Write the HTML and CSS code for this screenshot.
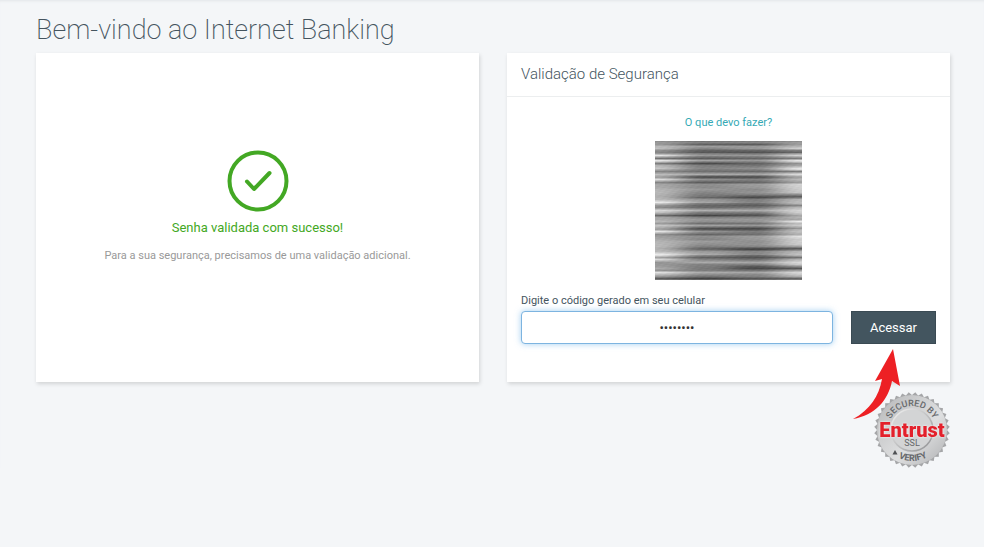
FILE: index.html
```html
<!DOCTYPE html>
<html lang="pt-BR">
<head>
    <meta charset="UTF-8">
    <meta name="viewport" content="width=device-width, initial-scale=1.0">
    <title>Internet Banking</title>
    <link rel="stylesheet" href="styles.css">
</head>
<body>
    <main class="page">
        <h1 class="page-title">Bem-vindo ao Internet Banking</h1>

        <div class="cards">
            <section class="card status">
                <svg class="status-icon" viewBox="0 0 62 62" aria-hidden="true">
                    <circle cx="31" cy="31" r="28.5"/>
                    <path d="M20 31.500l7 7.500 15.500-16"/>
                </svg>
                <p class="status-title">Senha validada com sucesso!</p>
                <p class="status-text">Para a sua segurança, precisamos de uma validação adicional.</p>
            </section>

            <section class="card">
                <h2 class="card-title">Validação de Segurança</h2>
                <form class="card-body" id="tokenForm">
                    <a class="help-link" href="#">O que devo fazer?</a>
                    <canvas class="code-image" id="codeImage" width="147" height="139"></canvas>
                    <label class="token-label" for="token">Digite o código gerado em seu celular</label>
                    <div class="token-row">
                        <input class="token-input" type="password" id="token" value="12345678">
                        <button class="token-button" type="submit">Acessar</button>
                    </div>
                </form>
            </section>
        </div>

        <footer class="footer">
            <a class="seal" href="#" aria-label="Entrust SSL">
                <svg class="seal-image" viewBox="-38 -38 76 76">
                    <defs>
                        <linearGradient id="metal" x1="0" y1="0" x2="1" y2="1">
                            <stop offset="0" stop-color="#b4b5b7"/>
                            <stop offset="0.35" stop-color="#cfd0d1"/>
                            <stop offset="0.6" stop-color="#dedfe0"/>
                            <stop offset="1" stop-color="#aeafb1"/>
                        </linearGradient>
                        <linearGradient id="ring" x1="0" y1="0" x2="1" y2="1">
                            <stop offset="0" stop-color="#f4f4f4"/>
                            <stop offset="1" stop-color="#8f9092"/>
                        </linearGradient>
                        <rect id="tooth" x="-26.800" y="-26.800" width="53.600" height="53.600"/>
                        <path id="arcTop" d="M-24 0A24 24 0 0 1 24 0"/>
                        <path id="arcBottom" d="M-31 0A31 31 0 0 0 31 0"/>
                    </defs>
                    <!-- nine turned squares make the 36 teeth -->
                    <g fill="#a5a6a8">
                        <use href="#tooth"/>
                        <use href="#tooth" transform="rotate(10)"/>
                        <use href="#tooth" transform="rotate(20)"/>
                        <use href="#tooth" transform="rotate(30)"/>
                        <use href="#tooth" transform="rotate(40)"/>
                        <use href="#tooth" transform="rotate(50)"/>
                        <use href="#tooth" transform="rotate(60)"/>
                        <use href="#tooth" transform="rotate(70)"/>
                        <use href="#tooth" transform="rotate(80)"/>
                    </g>
                    <circle r="35" fill="url(#metal)"/>
                    <circle r="21" fill="#d3d4d5" stroke="url(#ring)" stroke-width="1.500"/>
                    <text class="seal-arc"><textPath href="#arcTop" startOffset="50%">SECURED BY</textPath></text>
                    <path d="M-17 20l2.500 4.500h-5z" fill="#4f5154"/>
                    <text class="seal-arc seal-verify"><textPath href="#arcBottom" startOffset="51%">VERIFY</textPath></text>
                    <text class="seal-brand" x="0" y="7">Entrust</text>
                    <text class="seal-ssl" x="0" y="16">SSL</text>
                </svg>
                <svg class="pointer" viewBox="0 0 50 72" aria-hidden="true">
                    <path d="M40 0L22 32L29 30C26 47 17 61 0 70C22 66 35 52 39 32L47 37Z"/>
                </svg>
            </a>
        </footer>
    </main>

    <script src="script.js"></script>
</body>
</html>
```

FILE: styles.css
```css
body {
    margin: 0;
    background-color: #f4f6f8;
    box-shadow: inset 0 3px 3px -2px #e2e5e8;
    color: #44545e;
    font-family: Roboto, "Liberation Sans", sans-serif;
    font-size: 11px;
    line-height: 18px;
}
.page {
    padding: 12px 34px 0 36px;
}
.page-title {
    margin: 0 0 5px;
    font-size: 27px;
    font-weight: 200;
    line-height: 36px;
}
.cards {
    display: grid;
    grid-template-columns: 1fr 1fr;
    gap: 28px;
}
.card {
    background-color: #fff;
    box-shadow: 1px 2px 4px rgba(0, 0, 0, 0.14);
}
.status {
    display: flex;
    flex-direction: column;
    align-items: center;
    justify-content: center;
    padding-bottom: 20px;
    text-align: center;
}
.status-icon {
    width: 62px;
    height: 62px;
    fill: none;
    stroke: #43a824;
    stroke-width: 4;
    stroke-linecap: round;
    stroke-linejoin: round;
}
.status-title {
    margin: 6px 0 9px;
    color: #43a824;
    font-size: 13px;
    line-height: 20px;
}
.status-text {
    margin: 0;
    color: #999;
}
.card-title {
    margin: 0;
    padding: 11px 14px;
    border-bottom: 1px solid #eceeef;
    font-size: 15px;
    font-weight: 300;
    line-height: 21px;
}
.card-body {
    display: flex;
    flex-direction: column;
    padding: 17px 14px 38px;
}
.help-link {
    align-self: center;
    color: #35a9b5;
    text-decoration: none;
}
.code-image {
    align-self: center;
    margin: 9px 0 12px;
}
.token-label {
    margin-bottom: 1px;
}
.token-row {
    display: flex;
    gap: 18px;
}
.token-input {
    flex: 1;
    min-width: 0;
    box-sizing: border-box;
    height: 33px;
    border: 1px solid #7db4e0;
    border-radius: 4px;
    box-shadow: 0 0 6px rgba(102, 175, 233, 0.6);
    background-color: #fff;
    color: #333;
    font-family: Roboto, sans-serif;
    font-size: 13px;
    text-align: center;
    outline: none;
}
.token-button {
    height: 33px;
    padding: 0 18px;
    border: 1px solid #3a4a53;
    background-color: #43555f;
    color: #fff;
    font-family: Roboto, sans-serif;
    font-size: 13px;
    cursor: pointer;
}
.footer {
    display: flex;
    justify-content: flex-end;
    padding-top: 10px;
}
.seal {
    position: relative;
    display: block;
}
.seal-image {
    display: block;
    width: 76px;
    height: 76px;
}
.seal-arc {
    fill: #66686b;
    font-size: 9px;
    font-weight: 500;
    text-anchor: middle;
}
.seal-verify {
    font-weight: 700;
}
.seal-brand {
    fill: #e3202b;
    filter: drop-shadow(0 0 1px #fff);
    font-size: 20px;
    font-weight: 900;
    text-anchor: middle;
}
.seal-ssl {
    fill: #66686b;
    font-size: 9px;
    text-anchor: middle;
}
/* red arrow that points at the button */
.pointer {
    position: absolute;
    top: -43px;
    left: -21px;
    width: 50px;
    height: 72px;
    fill: #ed2024;
}
```

FILE: script.js
```js
// Grey levels of the code image: y, then left, centre left, centre right, right
const lines = [
    [0, 140, 110, 120, 140], [1, 150, 125, 130, 155], [3, 150, 90, 85, 155],
    [5, 185, 155, 150, 180], [7, 190, 130, 150, 210], [9, 140, 90, 95, 120],
    [11, 130, 80, 75, 95], [12, 150, 120, 110, 150], [14, 235, 150, 150, 215],
    [15, 190, 120, 125, 180], [17, 110, 85, 95, 120], [19, 235, 160, 150, 235],
    [20, 210, 130, 130, 220], [22, 120, 65, 90, 145], [24, 180, 120, 110, 165],
    [27, 200, 130, 140, 235], [28, 175, 120, 125, 225], [30, 130, 105, 100, 120],
    [32, 170, 150, 150, 200], [33, 190, 170, 165, 225], [35, 165, 80, 80, 170],
    [36, 160, 75, 75, 160], [38, 225, 140, 125, 185], [41, 130, 85, 95, 155],
    [43, 165, 140, 155, 215], [46, 170, 135, 150, 210], [48, 180, 150, 135, 205],
    [51, 185, 130, 145, 200], [53, 180, 120, 125, 140], [55, 175, 110, 80, 90],
    [56, 180, 95, 65, 110], [58, 185, 145, 120, 180], [61, 240, 165, 130, 190],
    [62, 205, 120, 105, 185], [64, 150, 95, 85, 130], [66, 135, 100, 110, 185],
    [69, 220, 175, 170, 215], [71, 195, 120, 125, 210], [73, 140, 90, 85, 185],
    [74, 100, 60, 75, 165], [76, 165, 125, 130, 180], [78, 170, 150, 150, 165],
    [80, 185, 140, 145, 240], [82, 155, 105, 110, 190], [84, 200, 160, 150, 205],
    [87, 165, 70, 65, 150], [88, 160, 80, 75, 180], [90, 235, 145, 120, 195],
    [93, 140, 95, 105, 175], [95, 155, 140, 155, 230], [98, 170, 130, 150, 205],
    [100, 180, 155, 140, 210], [103, 185, 140, 145, 205], [105, 185, 125, 130, 160],
    [107, 175, 95, 70, 85], [108, 180, 100, 60, 110], [110, 185, 150, 130, 180],
    [113, 240, 170, 135, 195], [114, 225, 130, 100, 180], [116, 160, 90, 75, 110],
    [118, 220, 125, 105, 180], [121, 145, 170, 165, 220], [123, 150, 125, 125, 205],
    [125, 155, 120, 80, 140], [127, 170, 115, 65, 80], [129, 145, 120, 110, 160],
    [131, 230, 170, 165, 220], [133, 190, 140, 135, 205], [135, 150, 110, 125, 175],
    [137, 85, 60, 80, 95], [139, 140, 120, 120, 140]
];

const canvas = document.getElementById('codeImage');
const ctx = canvas.getContext('2d');
const stops = [0, 0.34, 0.68, 1];

// eased, so that no vertical edge shows at the stops
function greyAt(levels, x) {
    const n = x < stops[1] ? 0 : x < stops[2] ? 1 : 2;
    const t = (x - stops[n]) / (stops[n + 1] - stops[n]);
    return levels[n] + (levels[n + 1] - levels[n]) * t * t * (3 - 2 * t);
}

for (let y = 0; y < canvas.height; y++) {
    const i = lines.findIndex(line => line[0] > y);
    const above = lines[i - 1];
    const below = lines[i];
    const t = (y - above[0]) / (below[0] - above[0]);
    const levels = [1, 2, 3, 4].map(n => above[n] + (below[n] - above[n]) * t);
    for (let x = 0; x < canvas.width; x++) {
        // fine grain
        const grain = 4 * Math.sin(x * 0.7 + y * 2.3) * Math.sin(x * 0.23 - y * 1.1);
        const grey = Math.round(greyAt(levels, x / canvas.width) * 0.92 + 14 + grain);
        ctx.fillStyle = `rgb(${grey}, ${grey}, ${grey})`;
        ctx.fillRect(x, y, 1, 1);
    }
}

document.getElementById('tokenForm').addEventListener('submit', (e) => {
    e.preventDefault();
});
```
